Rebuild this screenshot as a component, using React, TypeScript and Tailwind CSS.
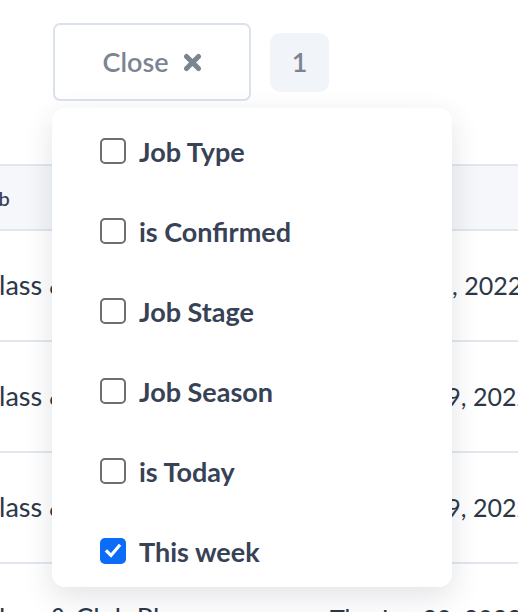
import { useState } from "react";

const filters = [
  { label: "Job Type", checked: false },
  { label: "is Confirmed", checked: false },
  { label: "Job Stage", checked: false },
  { label: "Job Season", checked: false },
  { label: "is Today", checked: false },
  { label: "This week", checked: true },
];

const rows = [
  { job: "Class & Club Play", date: "Mon Jul 11, 2022" },
  { job: "Class & Club Play", date: "Wed Jun 29, 2022" },
  { job: "Class & Club Play", date: "Wed Jun 29, 2022" },
  { job: "Class & Club Play", date: "Thu Jun 30, 2022" },
];

function CloseIcon() {
  return (
    <svg width="19" height="19" viewBox="0 0 19 19" className="text-[#7c8491]">
      <path
        d="M3.5 3.5 L15.5 15.5 M15.5 3.5 L3.5 15.5"
        stroke="currentColor"
        strokeWidth="5"
        strokeLinecap="round"
      />
    </svg>
  );
}

function Checkbox({ checked }: { checked: boolean }) {
  if (checked) {
    return (
      <span className="flex h-[26px] w-[26px] shrink-0 items-center justify-center rounded-[5px] bg-[#0b6cf7]">
        <svg width="18" height="18" viewBox="0 0 18 18">
          <path
            d="M3 9.5 L7 13.5 L15 4"
            fill="none"
            stroke="white"
            strokeWidth="3.2"
            strokeLinecap="square"
          />
        </svg>
      </span>
    );
  }
  return (
    <span className="h-[26px] w-[26px] shrink-0 rounded-[5px] border-2 border-[#6e6e6e] bg-white" />
  );
}

export default function App() {
  const [items, setItems] = useState(filters);

  const toggle = (i: number) =>
    setItems((prev) =>
      prev.map((f, idx) => (idx === i ? { ...f, checked: !f.checked } : f))
    );

  return (
    <div
      className="relative h-[612px] w-[518px] overflow-hidden bg-white"
      style={{ fontFamily: "Lato, 'Open Sans', sans-serif" }}
    >
      {/* Toolbar */}
      <div className="flex items-center gap-[19px] pl-[53px] pt-[23px]">
        <div className="relative">
          <button className="flex h-[78px] w-[198px] items-center justify-center gap-[14px] rounded-[7px] border-2 border-[#dce2eb] bg-white">
            <span className="text-[27px] font-semibold text-[#7c8491]">Close</span>
            <CloseIcon />
          </button>

          {/* Filter dropdown */}
          <div className="absolute left-[-1px] top-[85px] z-10 flex h-[479px] w-[400px] flex-col gap-[56px] rounded-[13px] bg-white pl-[48px] pt-[31px] shadow-[0_10px_30px_rgba(30,41,59,0.13)]">
            {items.map((f, i) => (
              <label
                key={f.label}
                onClick={() => toggle(i)}
                className="flex h-[24px] cursor-pointer items-center gap-[13px]"
              >
                <Checkbox checked={f.checked} />
                <span className="text-[27px] font-bold leading-none text-[#374256]">
                  {f.label}
                </span>
              </label>
            ))}
          </div>
        </div>

        <div className="flex h-[59px] w-[59px] items-center justify-center rounded-[10px] bg-[#f1f4f8] text-[27px] font-semibold text-[#7c8491]">
          1
        </div>
      </div>

      {/* Table behind the dropdown */}
      <div className="mt-[63px] overflow-hidden">
        <div className="flex h-[67px] items-center border-y-2 border-[#e2e7ee] bg-[#f5f7fa]">
          <span className="ml-[-21px] w-[351px] shrink-0 text-[20px] font-medium text-[#374151]">
            Job
          </span>
          <span className="text-[20px] font-medium text-[#374151]">Date</span>
        </div>
        {rows.map((r, i) => (
          <div
            key={i}
            className="flex h-[111px] items-center border-b-2 border-[#e2e7ee]"
          >
            <span className="ml-[-19px] w-[349px] shrink-0 whitespace-nowrap text-[27px] text-[#2d3748]">
              {r.job}
            </span>
            <span className="whitespace-nowrap text-[25px] text-[#2d3748]">
              {r.date}
            </span>
          </div>
        ))}
      </div>
    </div>
  );
}
